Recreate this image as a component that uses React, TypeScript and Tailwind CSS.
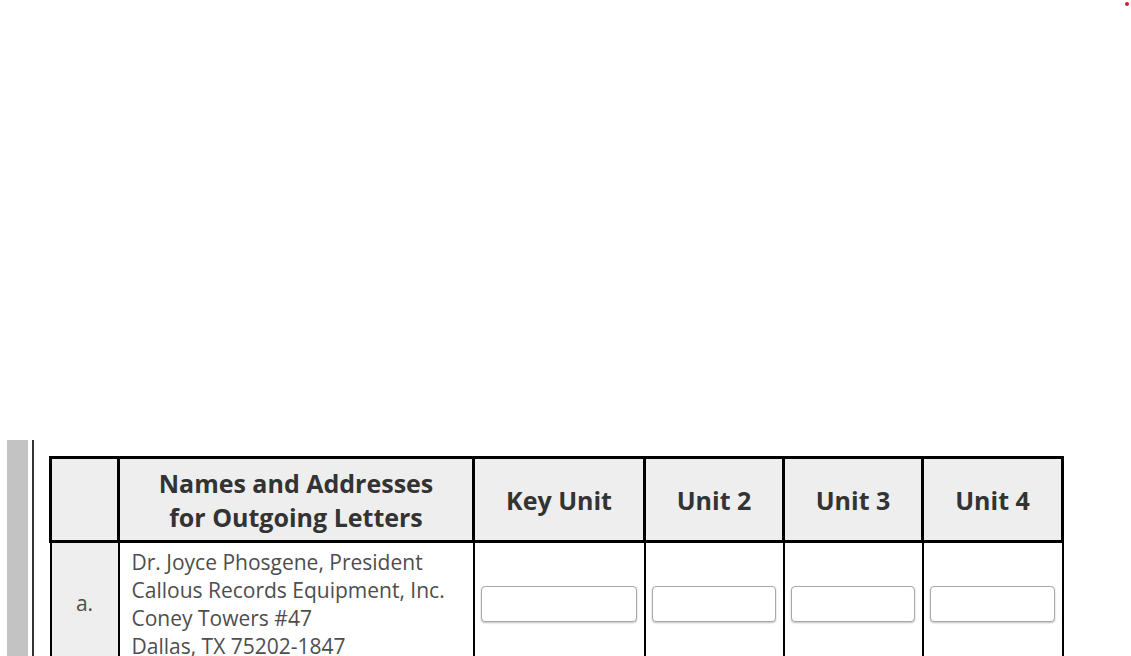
import React from "react";

const units = ["Key Unit", "Unit 2", "Unit 3", "Unit 4"];

export default function App() {
  return (
    <div className="relative h-[656px] w-[1131px] overflow-hidden bg-white font-['Open_Sans',sans-serif]">
      {/* red status dot */}
      <div className="absolute right-[2px] top-[2px] h-[4px] w-[4px] rounded-full bg-[#d0202a]" />

      <div className="flex pt-[440px]">
        <div className="ml-[7px] h-[300px] w-[21px] bg-[#c3c3c3]" />
        <div className="ml-[4px] h-[300px] w-[2px] bg-[#333]" />

        <div className="ml-[15px] pt-[16px]">
          <table className="w-[1012px] table-fixed border-collapse text-[#333]">
            <colgroup>
              <col className="w-[68px]" />
              <col className="w-[355px]" />
              <col className="w-[171px]" />
              <col className="w-[139px]" />
              <col className="w-[139px]" />
              <col className="w-[140px]" />
            </colgroup>
            <thead>
              <tr className="h-[84px]">
                <th className="border-[3px] border-black bg-[#eeeeee]" />
                <th className="border-[3px] border-black bg-[#eeeeee] text-[25px] font-bold leading-[34px]">
                  Names and Addresses
                  <br />
                  for Outgoing Letters
                </th>
                {units.map((u) => (
                  <th
                    key={u}
                    className="border-[3px] border-black bg-[#eeeeee] text-[25px] font-bold leading-[34px]"
                  >
                    {u}
                  </th>
                ))}
              </tr>
            </thead>
            <tbody>
              <tr>
                <td className="border-2 border-black bg-[#eeeeee] pt-[5px] text-center text-[21px] text-[#4d4d4d]">
                  a.
                </td>
                <td className="whitespace-nowrap border-2 border-black px-[12px] pt-[5px] text-[21px] leading-[28px] text-[#4d4d4d]">
                  Dr. Joyce Phosgene, President
                  <br />
                  Callous Records Equipment, Inc.
                  <br />
                  Coney Towers #47
                  <br />
                  Dallas, TX 75202-1847
                </td>
                {units.map((u) => (
                  <td key={u} className="border-2 border-black pl-[6px] pr-[7px] pt-[4px]">
                    <input
                      type="text"
                      className="h-[36px] w-full rounded-[4px] border border-[#a9a9a9] bg-white shadow-[0_1px_2px_rgba(0,0,0,0.25)]"
                    />
                  </td>
                ))}
              </tr>
            </tbody>
          </table>
        </div>
      </div>
    </div>
  );
}
